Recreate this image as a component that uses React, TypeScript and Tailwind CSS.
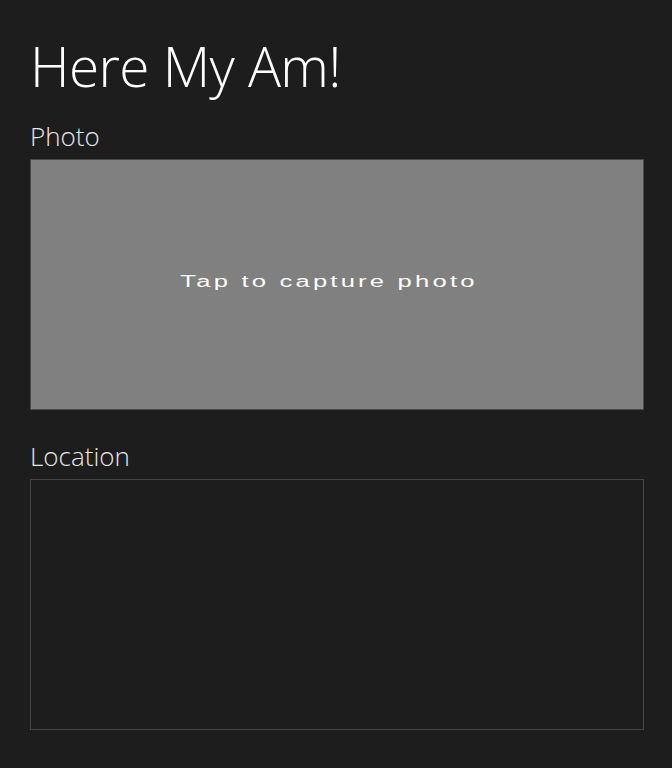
import React from 'react';

export default function App() {
  return (
    <div className="w-[672px] h-[768px] bg-[#1d1d1d] text-white overflow-hidden" style={{ fontFamily: '"Open Sans", "Noto Sans", sans-serif' }}>
      <div className="pl-[30px] pr-[28px] pt-[34px] flex flex-col">
        <h1 className="text-[55px] leading-[64px] font-light tracking-[-0.6px] text-white">Here My Am!</h1>
        <h2 className="mt-[23px] text-[26px] leading-[30px] font-light text-[#e6e6e6]">Photo</h2>
        <div className="mt-[8px] relative h-[251px] w-[614px] bg-[#808080] border border-[#4a4a4a] flex items-center justify-center">
          <span className="absolute left-[8px] top-[29px] w-[1px] h-[1px] bg-[#5a7fa0]" />
          <span
            className="-mt-[6px] -ml-[16px] text-[16px] leading-[20px] text-white tracking-[2px] scale-x-[1.6]"
            style={{ fontFamily: '"Liberation Sans", Arial, sans-serif' }}
          >
            Tap to capture photo
          </span>
        </div>
        <h2 className="mt-[31px] text-[26px] leading-[30px] font-light text-[#e6e6e6]">Location</h2>
        <div className="mt-[8px] h-[251px] w-[614px] border border-[#454545]" />
      </div>
    </div>
  );
}
